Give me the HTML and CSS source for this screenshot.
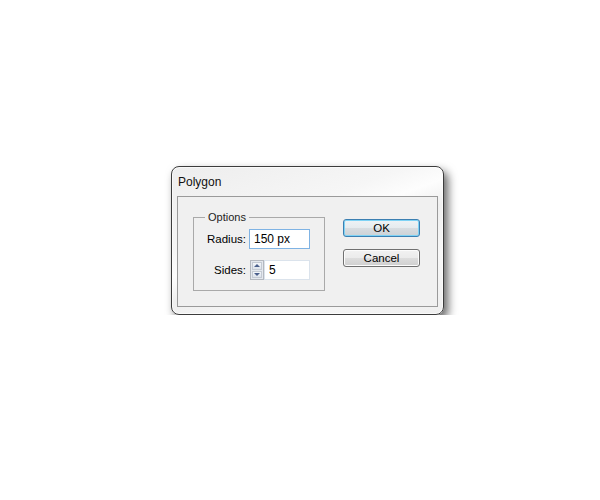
FILE: index.html
```html
<!DOCTYPE html>
<html lang="en">
<head>
    <meta charset="UTF-8">
    <title>Polygon</title>
    <link rel="stylesheet" href="styles.css">
</head>
<body>
    <div class="dialog">
        <div class="title">Polygon</div>
        <div class="panel">
            <fieldset class="group">
                <legend>Options</legend>
                <div class="row">
                    <label>Radius:</label>
                    <div class="field focused">150 px</div>
                </div>
                <div class="row">
                    <label>Sides:</label>
                    <div class="spinner">
                        <span class="spin up"></span>
                        <span class="spin down"></span>
                    </div>
                    <div class="field short">5</div>
                </div>
            </fieldset>
            <div class="buttons">
                <button class="btn default">OK</button>
                <button class="btn">Cancel</button>
            </div>
        </div>
    </div>
</body>
</html>
```

FILE: styles.css
```css
* {
    margin: 0;
    padding: 0;
    box-sizing: border-box;
}
body {
    background: #fff;
    font-family: "Liberation Sans", Arial, sans-serif;
    font-size: 11px;
    color: #000;
    padding: 166px 0 0 171px;
}

/* Window frame */
.dialog {
    width: 273px;
    height: 149px;
    border: 1px solid #3c3c3c;
    border-radius: 8px;
    background: linear-gradient(160deg, #ededed 0%, #f6f6f6 35%, #fdfdfd 45%, #efefef 55%, #f7f7f7 75%, #efefef 100%);
    box-shadow: 4px 5px 10px rgba(0, 0, 0, 0.6), 0 0 0 1px rgba(255, 255, 255, 0.6) inset;
    padding: 0 5px 6px 5px;
}
.title {
    height: 29px;
    padding: 8px 0 0 1px;
    font-size: 12px;
    color: #111;
}

/* Client area */
.panel {
    height: 111px;
    border: 1px solid #9a9a9a;
    background: #f0f0f0;
    display: flex;
    padding: 14px 0 0 15px;
}

/* Group box */
.group {
    width: 132px;
    height: 80px;
    border: 1px solid #a9a9a9;
    padding: 5px 0 0 0;
}
.group legend {
    margin-left: 11px;
    padding: 0 3px;
    color: #222;
    font-size: 11px;
    line-height: 13px;
}
.row {
    display: flex;
    align-items: center;
    margin-bottom: 11px;
}
.row label {
    width: 54px;
    text-align: right;
    padding-right: 2px;
    font-size: 11.5px;
}
.field {
    width: 61px;
    height: 20px;
    margin-left: 1px;
    border: 1px solid #b8cde2;
    background: #fff;
    font-size: 12px;
    line-height: 18px;
    padding-left: 4px;
}
.field.focused {
    border-color: #7fb3e4;
}
.field.short {
    width: 46px;
    margin-left: 0;
    border-color: #dbe3ec;
}

/* Up/down spinner */
.spinner {
    width: 14px;
    height: 20px;
    margin-left: 2px;
    border: 1px solid #b4b8bf;
    background: #e4e8ee;
    display: flex;
    flex-direction: column;
    padding: 1px;
    gap: 1px;
}
.spin {
    flex: 1;
    background: linear-gradient(#f3f6fa, #dde3eb);
    border: 1px solid #c4cad3;
    display: flex;
    align-items: center;
    justify-content: center;
}
.spin::after {
    content: "";
    border-left: 3px solid transparent;
    border-right: 3px solid transparent;
}
.spin.up::after {
    border-bottom: 3px solid #4a5f8c;
}
.spin.down::after {
    border-top: 3px solid #4a5f8c;
}

/* Buttons */
.buttons {
    display: flex;
    flex-direction: column;
    gap: 12px;
    margin: 8px 0 0 18px;
}
.btn {
    width: 77px;
    height: 18px;
    border: 1px solid #707070;
    border-radius: 3px;
    background: linear-gradient(#f2f2f2 0%, #ebebeb 50%, #dddddd 51%, #cfcfcf 100%);
    font-family: "Liberation Sans", Arial, sans-serif;
    font-size: 11.5px;
    color: #000;
    box-shadow: 0 0 0 1px #fcfcfc inset;
}
.btn.default {
    border-color: #3c7fb1;
    background: linear-gradient(#eef3f6 0%, #e6ebee 50%, #d8dde1 51%, #ccd2d6 100%);
    box-shadow: 0 0 0 1px #7fd3f5 inset;
}
```
